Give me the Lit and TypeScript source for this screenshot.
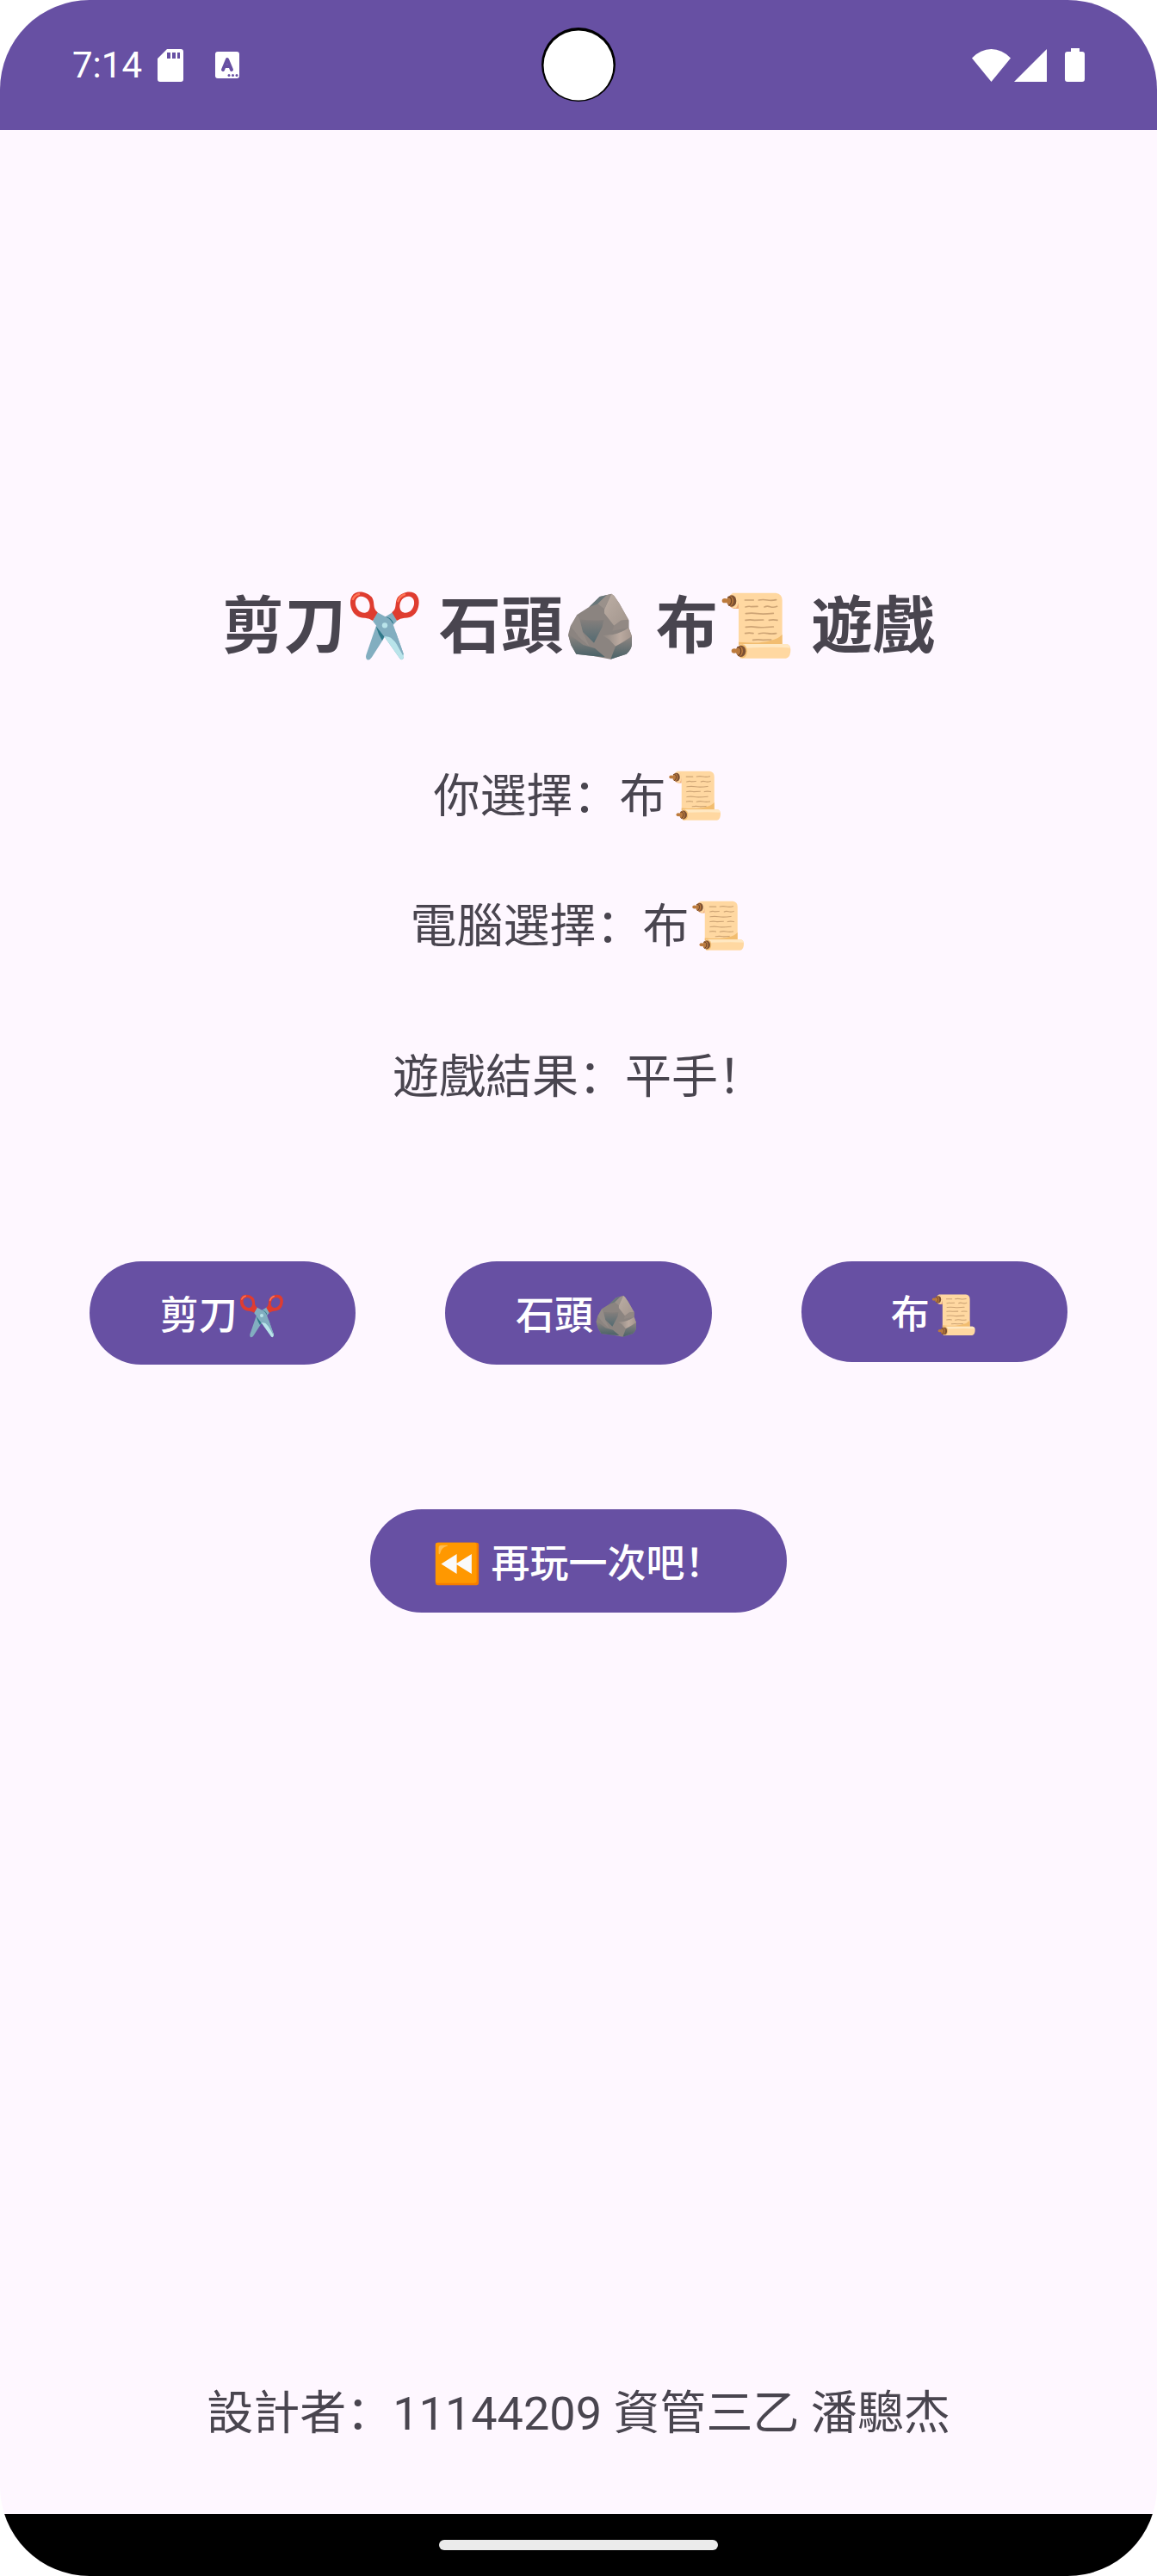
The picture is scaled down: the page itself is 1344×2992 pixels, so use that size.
import { LitElement, html, css, svg, nothing } from "lit";
import { customElement, property, state } from "lit/decorators.js";
import { classMap } from "lit/directives/class-map.js";

type Hand = "scissors" | "rock" | "paper";
type EmojiName = Hand | "rewind";

const HANDS: { id: Hand; label: string }[] = [
  { id: "scissors", label: "剪刀" },
  { id: "rock", label: "石頭" },
  { id: "paper", label: "布" },
];

const BEATS: Record<Hand, Hand> = {
  scissors: "paper",
  rock: "scissors",
  paper: "rock",
};

const labelOf = (hand: Hand) => HANDS.find((h) => h.id === hand)!.label;

const ART = {
  scissors: {
    box: "487 73 268 252",
    art: svg`
      <path fill="#82aec0" d="M650 150 L663 182 L641 206 L576 308 Q568 320 560 317 Q553 313 556 300 L590 201 L621 168 Z"/>
      <path fill="#2f7889" d="M590 200 L619 236 L612 250 L600 228 Z M621 168 Q640 166 651 188 L645 196 Q637 178 621 173 Z"/>
      <path fill="#82aec0" d="M594 151 L634 173 Q646 182 652 200 L686 296 Q690 313 680 317 Q673 315 670 308 L619 236 L579 182 Z"/>
      <path fill="#b9e4ea" d="M619 236 Q632 234 642 240 Q668 262 686 296 Q690 313 680 317 Q673 315 670 308 Z"/>
      <path fill="#82aec0" d="M636 226 Q652 240 662 262 L684 302 L686 296 L660 222 Z"/>
      <circle cx="621" cy="197" r="9.500" fill="#b9e4ea"/>
      <path fill="#df3c30" fill-rule="evenodd" d="M518 84 C536 75 562 83 575 98 C585 111 581 128 586 139 Q589 147 596 152 L579 181 Q568 172 552 171 C530 172 513 160 506 142 C498 122 498 95 518 84 Z M526 101 C515 110 517 130 527 142 C537 154 552 157 562 149 C572 140 571 119 561 107 C551 96 536 93 526 101 Z"/>
      <path fill="#df3c30" fill-rule="evenodd" d="M723 84 C705 75 680 83 667 98 C657 111 661 128 656 139 Q653 147 646 152 L663 181 Q674 172 690 171 C712 172 728 160 735 142 C743 122 743 95 723 84 Z M716 101 C727 110 725 130 715 142 C705 154 690 157 680 149 C670 140 671 119 681 107 C691 96 706 93 716 101 Z"/>
      <g fill="none" stroke="#ff7555" stroke-width="7" stroke-linecap="round">
        <path d="M510 106 Q516 92 531 88"/><path d="M667 113 Q672 95 690 89"/>
      </g>`,
  },
  rock: {
    box: "45 73 268 252",
    art: svg`
      <defs>
        <linearGradient id="r1" x1="0" y1="0" x2="0" y2="1"><stop offset="0" stop-color="#857f7c"/><stop offset="1" stop-color="#536b72"/></linearGradient>
        <linearGradient id="r2" x1="0" y1="0" x2="1" y2="1"><stop offset="0" stop-color="#bcaea4"/><stop offset="1" stop-color="#a2958d"/></linearGradient>
        <linearGradient id="r3" x1="0" y1="0" x2="0" y2="1"><stop offset="0" stop-color="#8b8480"/><stop offset="1" stop-color="#4a6268"/></linearGradient>
        <linearGradient id="r4" x1="0" y1="0.500" x2="1" y2="0.500"><stop offset="0" stop-color="#8c8580"/><stop offset="0.600" stop-color="#bbaaa0"/><stop offset="1" stop-color="#a3958d"/></linearGradient>
      </defs>
      <path fill="#8b8480" d="M213 87 L172 97 L135 133 L93 160 L70 200 L62 230 L72 266 L90 297 L150 304 L210 315 L265 297 Q284 280 284 262 L284 235 L273 205 L273 180 L240 120 L222 94 Z"/>
      <path fill="#69777a" d="M172 97 L198 91 L168 121 L135 133 Z"/>
      <path fill="#9a918b" d="M213 87 L196 92 L165 122 L188 140 Z"/>
      <path fill="url(#r2)" d="M213 87 L188 142 L188 155 L222 198 L246 180 L273 178 L240 120 L222 94 Z"/>
      <path fill="url(#r1)" d="M102 176 Q145 182 186 178 L181 202 L152 258 L113 220 Z"/>
      <path fill="#9e948d" d="M93 160 L70 200 L75 206 L102 240 L136 270 L113 220 L102 176 Z" opacity="0.500"/>
      <path fill="url(#r3)" d="M62 230 L76 236 L114 265 L155 277 L190 307 L150 304 L90 297 L72 266 Z"/>
      <path fill="#928984" d="M222 198 L246 180 L273 178 L273 205 L216 216 Z"/>
      <path fill="url(#r4)" d="M181 232 L216 230 Q252 221 273 205 L284 235 L256 253 L227 270 L205 246 Z"/>
      <path fill="url(#r3)" d="M227 270 L256 255 L284 238 L284 262 Q284 280 265 297 L210 315 Z"/>`,
  },
  paper: {
    box: "584 73 268 252",
    art: svg`
      <path fill="#f0ad78" d="M625 92 L655 88 L655 139 L640 139 Q624 136 620 120 Z"/>
      <path fill="#ffd8a1" d="M632 84 L785 84 Q807 87 807 110 L807 266 L655 266 L655 124 Q655 88 632 84 Z"/>
      <path fill="#ffd8a1" d="M625 92 Q640 76 652 98 Q660 118 646 137 L633 136 Z"/>
      <ellipse cx="631" cy="112" rx="16" ry="20" fill="#7d5133"/>
      <ellipse cx="625" cy="112" rx="12" ry="17" fill="#b97a3f"/>
      <path fill="none" stroke="#6d4429" stroke-width="4" d="M617 99 Q630 96 630 112 Q630 124 620 128"/>
      <ellipse cx="607" cy="111" rx="10" ry="8" fill="#bd7b3c"/>
      <path fill="#f2bd70" d="M807 229 L807 266 L655 266 L655 255 Q735 262 768 249 Q790 246 807 229 Z"/>
      <g fill="none" stroke="#cda475" stroke-width="5" stroke-linecap="round">
        <path d="M677 109 L707 109 M725 109 Q740 106 755 109 T786 108"/>
        <path d="M679 133 Q692 129 700 132 L721 131 M745 133 Q754 128 765 132 T789 131"/>
        <path d="M680 156 Q700 153 720 156 T776 155"/>
        <path d="M679 179 Q695 176 710 179 L741 178 M761 179 Q775 176 790 179"/>
        <path d="M680 203 Q700 200 715 203 T776 202"/>
        <path d="M678 225 Q692 222 706 225 M725 226 Q740 222 755 225 T786 225"/>
        <path d="M705 248 Q722 245 740 248 L768 247"/>
      </g>
      <path fill="#ffd8a1" d="M660 262 L822 262 Q836 265 836 282 Q836 308 820 312 L660 312 Z"/>
      <path fill="#ffe8c2" d="M668 262 L822 262 Q834 265 835 276 Q790 271 682 276 Z"/>
      <ellipse cx="668" cy="287" rx="17" ry="24" fill="#f2bd70"/>
      <ellipse cx="663" cy="287" rx="17" ry="20" fill="#7d5133"/>
      <ellipse cx="658" cy="287" rx="12" ry="17" fill="#b97a3f"/>
      <path fill="none" stroke="#6d4429" stroke-width="4" d="M650 274 Q663 271 663 287 Q663 299 653 303"/>
      <ellipse cx="640" cy="286" rx="10" ry="8" fill="#bd7b3c"/>`,
  },
  rewind: {
    box: "0 0 136 128",
    art: svg`
      <rect x="7" y="4" width="122" height="120" rx="6" fill="#f57c00"/>
      <path fill="#ff9800" d="M7 10 Q7 4 13 4 L118 4 Q123 4 123 10 L123 112 Q123 118 116 118 L13 118 Q7 118 7 112 Z"/>
      <path fill="#ffbd52" d="M16 34 L16 18 Q16 11 24 11 L41 11 Q43 13 38 14 Q24 17 20 34 Q18 39 16 34 Z"/>
      <path fill="#fafafa" d="M23 64 L67 36 L67 62 L109 36 L109 92 L67 66 L67 92 Z"/>`,
  },
};

@customElement("emoji-glyph")
export class EmojiGlyph extends LitElement {
  @property() name: EmojiName = "paper";
  @property() size: "large" | "medium" | "small" = "medium";
  @property() label = "";

  static styles = css`
    :host {
      display: inline;
    }
    .glyph {
      display: inline-block;
      overflow: visible;
    }
    .large {
      width: 90px;
      height: 84px;
      vertical-align: -17px;
    }
    .medium {
      width: 67px;
      height: 63px;
      vertical-align: -12px;
    }
    .small {
      width: 56px;
      height: 53px;
      vertical-align: -11px;
    }
  `;

  render() {
    const { box, art } = ART[this.name];
    return html`<svg class="glyph ${this.size}" viewBox=${box} role="img" aria-label=${this.label || this.name}>${art}</svg>`;
  }
}

@customElement("status-bar")
export class StatusBar extends LitElement {
  static styles = css`
    :host {
      display: block;
    }
    .bar {
      position: relative;
      display: flex;
      align-items: center;
      justify-content: space-between;
      height: 151px;
      padding: 0 84px;
      box-sizing: border-box;
      background: #6750a3;
      color: #fff;
      font: 400 42px/48px Roboto, sans-serif;
    }
    .group {
      display: flex;
      align-items: center;
    }
    .time {
      margin-right: 18px;
    }
    .sd {
      margin-right: 37px;
    }
    .signal {
      margin: 0 21px 0 4px;
    }
    .icon {
      display: block;
      fill: #fff;
    }
    .camera {
      position: absolute;
      top: 32px;
      left: 50%;
      margin-left: -43px;
      width: 86px;
      height: 86px;
    }
  `;

  render() {
    return html`
      <div class="bar">
        <div class="group">
          <span class="time">7:14</span>
          <svg class="icon sd" width="30" height="38" viewBox="0 0 30 38" aria-hidden="true">
            <path fill-rule="evenodd" d="M11 0H27Q30 0 30 3V35Q30 38 27 38H3Q0 38 0 35V11ZM11 4V11H15V4ZM17 4V11H21V4ZM23 4V11H26V4Z"/>
          </svg>
          <svg class="icon" width="28" height="31" viewBox="0 0 28 31" aria-hidden="true">
            <rect width="28" height="31" rx="3"/>
            <path fill="none" stroke="#6750a3" stroke-width="4" stroke-linecap="round" stroke-linejoin="round" d="M9 21L14 9L19 21M11 17H17"/>
            <g fill="#6750a3"><circle cx="16" cy="27.500" r="1.500"/><circle cx="20.500" cy="27.500" r="1.500"/><circle cx="25" cy="27.500" r="1.500"/></g>
          </svg>
        </div>
        <svg class="camera" viewBox="0 0 86 86" aria-hidden="true">
          <circle cx="43" cy="43" r="43"/>
          <circle cx="43" cy="44" r="40.500" fill="#fff"/>
        </svg>
        <div class="group">
          <svg class="icon" width="45" height="38" viewBox="0 0 45 38" aria-hidden="true">
            <path d="M22.500 38L0 10.500Q10 0 22.500 0T45 10.500Z"/>
          </svg>
          <svg class="icon signal" width="38" height="38" viewBox="0 0 38 38" aria-hidden="true">
            <path d="M38 0V38H0Z"/>
          </svg>
          <svg class="icon" width="23" height="39" viewBox="0 0 23 39" aria-hidden="true">
            <path d="M7 0H17V4H20Q23 4 23 7V36Q23 39 20 39H3Q0 39 0 36V7Q0 4 3 4H7Z"/>
          </svg>
        </div>
      </div>
    `;
  }
}

@customElement("app-root")
export class AppRoot extends LitElement {
  @state() private player: Hand | null = "paper";
  @state() private computer: Hand | null = "paper";

  static styles = css`
    :host {
      display: block;
      background: #fff;
    }
    .screen {
      display: flex;
      flex-direction: column;
      min-height: 100vh;
      border-radius: 104px;
      overflow: hidden;
      background: #fef7ff;
      color: #49454f;
      font-family: Roboto, "Noto Sans CJK SC", sans-serif;
      font-size: 54px;
      line-height: 80px;
      text-align: center;
    }
    .main {
      flex: 1;
      display: flex;
      flex-direction: column;
      padding: 521px 104px 76px;
    }
    .title {
      margin: 0 0 102px;
      font-size: 72px;
      line-height: 112px;
      font-weight: 700;
    }
    .row {
      margin: 0;
    }
    .row.player {
      margin-bottom: 71px;
    }
    .row.computer {
      margin-bottom: 95px;
    }
    .row.result {
      margin-bottom: 173px;
    }
    .choices {
      display: flex;
      align-items: flex-start;
      gap: 104px;
      margin-bottom: 168px;
    }
    .button {
      box-sizing: border-box;
      height: 120px;
      padding: 8px 73px 0;
      border: 0;
      border-radius: 60px;
      background: #6750a3;
      color: #fff;
      font: inherit;
      font-size: 45px;
      line-height: 64px;
      font-weight: 500;
      white-space: nowrap;
      cursor: pointer;
    }
    .choice {
      flex: 1;
      padding: 8px 0 0;
    }
    .short {
      height: 117px;
    }
    .replay {
      align-self: center;
    }
    .author {
      margin: auto 0 0;
    }
    .nav {
      display: flex;
      align-items: center;
      justify-content: center;
      height: 72px;
      background: #000;
    }
    .handle {
      width: 324px;
      height: 12px;
      border-radius: 6px;
      background: #ebebeb;
    }
  `;

  private play(hand: Hand) {
    this.player = hand;
    this.computer = HANDS[Math.floor(Math.random() * HANDS.length)].id;
  }

  private reset() {
    this.player = null;
    this.computer = null;
  }

  private get outcome() {
    if (!this.player || !this.computer) return "";
    if (this.player === this.computer) return "平手！";
    return BEATS[this.player] === this.computer ? "你贏了！" : "你輸了！";
  }

  private hand(hand: Hand | null) {
    return hand
      ? html`${labelOf(hand)}<emoji-glyph name=${hand} size="medium"></emoji-glyph>`
      : nothing;
  }

  render() {
    return html`
      <div class="screen" lang="zh">
        <status-bar></status-bar>
        <main class="main">
          <h1 class="title">${HANDS.map(
            (h) => html`${h.label}<emoji-glyph name=${h.id} size="large"></emoji-glyph>${" "}`
          )}遊戲</h1>
          <p class="row player">你選擇：${this.hand(this.player)}</p>
          <p class="row computer">電腦選擇：${this.hand(this.computer)}</p>
          <p class="row result">遊戲結果：${this.outcome}</p>
          <div class="choices">
            ${HANDS.map(
              (h) => html`<button
                type="button"
                class=${classMap({ button: true, choice: true, short: h.id === "paper" })}
                @click=${() => this.play(h.id)}
              >${h.label}<emoji-glyph name=${h.id} size="small"></emoji-glyph></button>`
            )}
          </div>
          <button type="button" class="button replay" @click=${this.reset}><emoji-glyph name="rewind" size="small"></emoji-glyph> 再玩一次吧！</button>
          <p class="author">設計者：11144209 資管三乙 潘驄杰</p>
        </main>
        <div class="nav"><div class="handle"></div></div>
      </div>
    `;
  }
}
